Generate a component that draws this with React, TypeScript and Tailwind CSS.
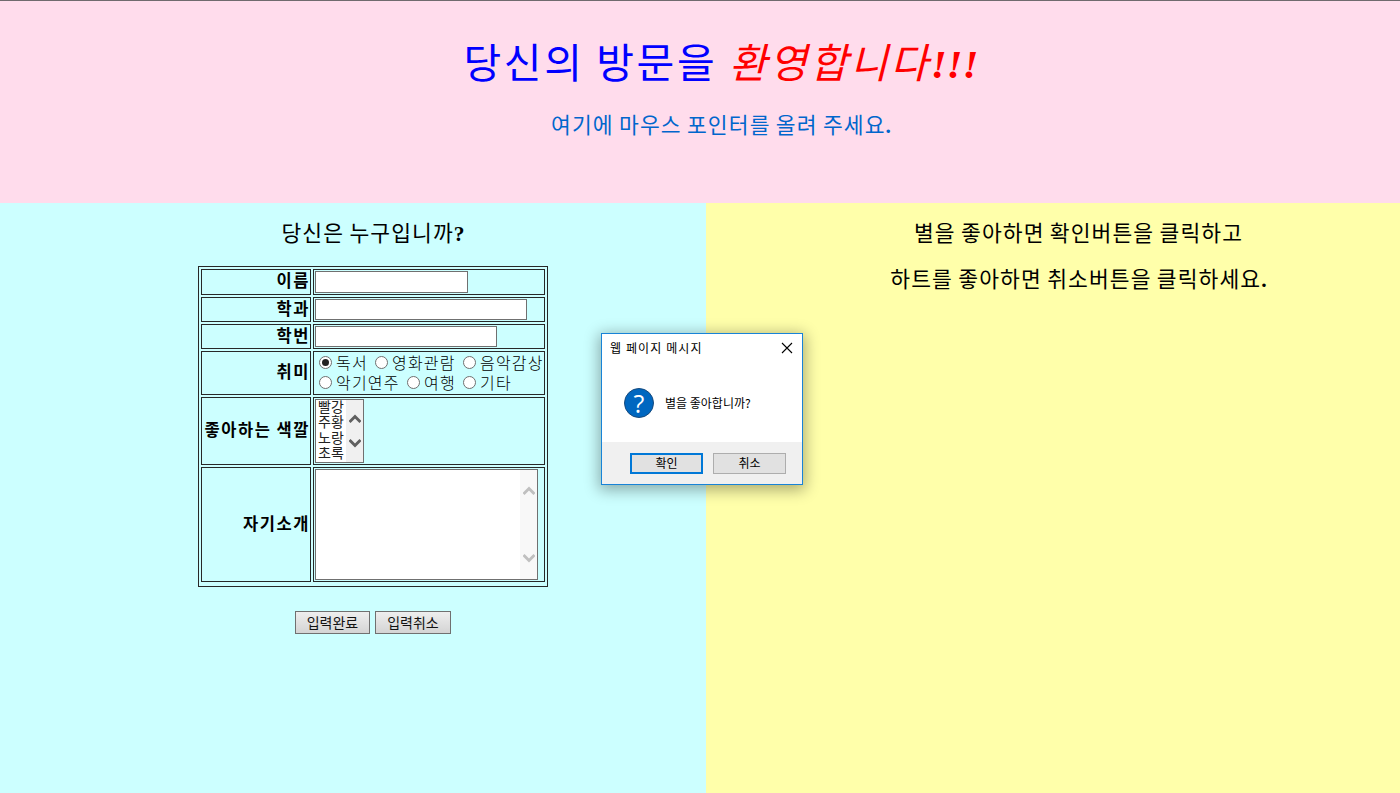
import type { ReactNode } from 'react';

const hobbyRows = [
  [
    { label: '독서', width: 'w-[56px]', checked: true },
    { label: '영화관람', width: 'w-[88px]', checked: false },
    { label: '음악감상', width: 'w-[81px]', checked: false },
  ],
  [
    { label: '악기연주', width: 'w-[88px]', checked: false },
    { label: '여행', width: 'w-[56px]', checked: false },
    { label: '기타', width: 'w-[56px]', checked: false },
  ],
];

function Punct({ children }: { children: ReactNode }) {
  return <span className="font-['Liberation_Serif',serif] font-bold leading-[0] tracking-normal">{children}</span>;
}

function Heading({ children, className }: { children: ReactNode; className: string }) {
  return (
    <p className={`h-[30px] whitespace-nowrap text-[21.5px] leading-[30px] tracking-[1.1px] [word-spacing:-0.6px] ${className}`}>
      {children}
    </p>
  );
}

function Row({ label, height, children }: { label: string; height: string; children: ReactNode }) {
  return (
    <div className={`flex gap-[2px] ${height}`}>
      <div className="flex w-[110px] items-center justify-end border border-[#282828] pr-px">
        <span className="whitespace-nowrap pb-[4px] text-[16.5px] font-bold leading-[20px] tracking-[1.6px] [word-spacing:-0.5px] -mr-px">{label}</span>
      </div>
      <div className="w-[232px] border border-[#282828] pl-px pt-px">{children}</div>
    </div>
  );
}

function Radio({ checked }: { checked: boolean }) {
  return (
    <span className="flex size-[13px] shrink-0 items-center justify-center rounded-full border border-[#707070] bg-white">
      {checked && <span className="size-[7px] rounded-full bg-[#222222]" />}
    </span>
  );
}

function Chevron({ up, color }: { up?: boolean; color: string }) {
  return (
    <svg width="12" height="10" viewBox="0 0 12 10" className={`${color} ${up ? '' : 'rotate-180'}`} fill="none">
      <path d="M0.5 8 6 2.5 11.5 8" stroke="currentColor" strokeWidth="3" />
    </svg>
  );
}

export default function App() {
  return (
    <div className="relative flex h-[793px] w-[1400px] flex-col overflow-hidden font-['Noto_Sans_CJK_KR',sans-serif] text-black">
      <header className="flex h-[203px] flex-col items-center border-t border-[#706a6e] bg-[#ffdcec] pl-[42px]">
        <h1 className="mt-[30px] h-[58px] whitespace-nowrap text-[41px] leading-[58px] tracking-[2.6px] text-[#0000ff]">
          당신의 방문을{' '}
          <span className="italic text-[#ff0000]">
            환영합니다<Punct>!!!</Punct>
          </span>
        </h1>
        <Heading className="mt-[20px] text-[#0066cc]">
          여기에 마우스 포인터를 올려 주세요<Punct>.</Punct>
        </Heading>
      </header>

      <main className="flex flex-1">
        <section className="flex w-[706px] flex-col items-center bg-[#ccffff] pl-[40px]">
          <Heading className="mt-[14px]">
            당신은 누구입니까<Punct>?</Punct>
          </Heading>
          <div className="mt-[19px] flex h-[321px] w-[350px] flex-col gap-[2px] border border-[#282828] p-[2px]">
            <Row label="이름" height="h-[26px]">
              <div className="h-[22px] w-[153px] border border-[#707070] bg-white" />
            </Row>
            <Row label="학과" height="h-[25px]">
              <div className="h-[21px] w-[212px] border border-[#707070] bg-white" />
            </Row>
            <Row label="학번" height="h-[25px]">
              <div className="h-[21px] w-[182px] border border-[#707070] bg-white" />
            </Row>
            <Row label="취미" height="h-[44px]">
              <div className="-mt-px flex flex-col pl-[4px]">
                {hobbyRows.map((row, i) => (
                  <div key={i} className="flex h-[20px]">
                    {row.map((item) => (
                      <div key={item.label} className={`flex shrink-0 items-center gap-[4px] ${item.width}`}>
                        <Radio checked={item.checked} />
                        <span className="whitespace-nowrap text-[16px] font-light leading-[20px] tracking-[1.2px]">{item.label}</span>
                      </div>
                    ))}
                  </div>
                ))}
              </div>
            </Row>
            <Row label="좋아하는 색깔" height="h-[68px]">
              <div className="flex h-[64px] w-[49px] justify-between border border-[#707070] bg-white">
                <div className="-mt-px whitespace-nowrap pl-[2px] text-[14px] leading-[15.3px] text-[#222222]">
                  <div>빨강</div>
                  <div>주황</div>
                  <div>노랑</div>
                  <div>초록</div>
                </div>
                <div className="flex w-[17px] flex-col items-center justify-between bg-[#f0f0f0] pb-[14px] pt-[14px]">
                  <Chevron up color="text-[#606060]" />
                  <Chevron color="text-[#606060]" />
                </div>
              </div>
            </Row>
            <Row label="자기소개" height="h-[115px]">
              <div className="flex h-[111px] w-[223px] justify-end border border-[#707070] bg-white">
                <div className="flex w-[17px] flex-col items-center justify-between bg-[#f8f8f8] py-[16px]">
                  <Chevron up color="text-[#c0c0c0]" />
                  <Chevron color="text-[#c0c0c0]" />
                </div>
              </div>
            </Row>
          </div>
          <div className="mt-[24px] flex gap-[5px] text-[14px] leading-[18px] text-[#111111]">
            <button className="h-[23px] w-[75px] whitespace-nowrap border border-[#707070] bg-linear-to-b from-[#eeeeee] to-[#d4d4d4] pb-[2px]">입력완료</button>
            <button className="h-[23px] w-[76px] whitespace-nowrap border border-[#707070] bg-linear-to-b from-[#eeeeee] to-[#d4d4d4] pb-[2px]">입력취소</button>
          </div>
        </section>
        <section className="flex flex-1 flex-col items-center bg-[#ffffaa] pl-[51px]">
          <Heading className="mt-[14px]">별을 좋아하면 확인버튼을 클릭하고</Heading>
          <Heading className="mt-[16px]">
            하트를 좋아하면 취소버튼을 클릭하세요<Punct>.</Punct>
          </Heading>
        </section>
      </main>

      <div className="absolute left-[601px] top-[333px] flex h-[152px] w-[202px] flex-col border border-[#1883d7] bg-white text-[12px] shadow-[0_3px_14px_2px_rgba(0,0,0,0.33)]">
        <div className="flex h-[28px] items-center justify-between pl-[8px] pr-[9px]">
          <span className="whitespace-nowrap leading-[18px] tracking-[1.1px]">웹 페이지 메시지</span>
          <svg width="12" height="12" viewBox="0 0 12 12" stroke="#000" strokeWidth="1.1">
            <path d="m1 1 10 10M11 1 1 11" />
          </svg>
        </div>
        <div className="flex flex-1 items-start gap-[11px] pl-[22px] pt-[26px]">
          <div className="flex size-[30px] items-center justify-center rounded-full border border-[#174a7d] bg-[#0067c0] font-['Open_Sans',sans-serif] text-[25px] font-medium leading-[28px] text-white">
            ?
          </div>
          <span className="whitespace-nowrap leading-[29px]">별을 좋아합니까?</span>
        </div>
        <div className="flex h-[42px] gap-[10px] bg-[#f0f0f0] pl-[28px] pt-[11px]">
          <button className="h-[21px] w-[73px] border-2 border-[#0078d7] bg-[#e1e1e1] pb-[2px] leading-[15px]">확인</button>
          <button className="h-[21px] w-[73px] border border-[#adadad] bg-[#e1e1e1] pb-[2px] leading-[17px]">취소</button>
        </div>
      </div>
    </div>
  );
}
